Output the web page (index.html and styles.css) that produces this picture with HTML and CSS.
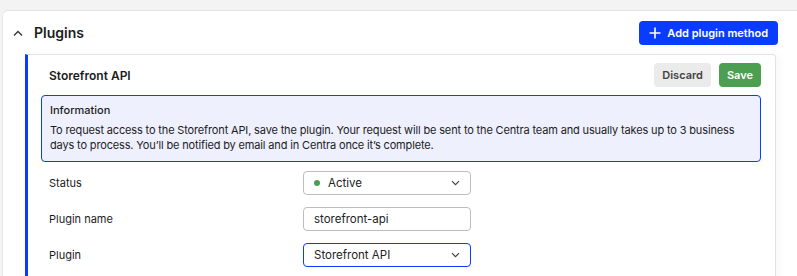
FILE: index.html
```html
<!DOCTYPE html>
<html lang="en">
<head>
    <meta charset="UTF-8">
    <meta name="viewport" content="width=device-width, initial-scale=1.0">
    <title>Plugins</title>
    <link rel="stylesheet" href="styles.css">
</head>
<body>
    <section class="panel">
        <div class="panel-header">
            <div class="panel-title">
                <svg class="chevron" width="10" height="6" viewBox="0 0 10 6"><path d="M1 5.5 L5 1.5 L9 5.5" fill="none" stroke="#333" stroke-width="1.3"/></svg>
                <h2>Plugins</h2>
            </div>
            <button class="btn btn-primary">
                <svg width="12" height="12" viewBox="0 0 12 12"><path d="M6 0.5v11M0.5 6h11" stroke="#fff" stroke-width="1.6"/></svg>
                Add plugin method
            </button>
        </div>

        <div class="plugin-card">
            <div class="card-head">
                <h3>Storefront API</h3>
                <div class="actions">
                    <button class="btn btn-light">Discard</button>
                    <button class="btn btn-success">Save</button>
                </div>
            </div>

            <div class="info">
                <p class="info-title">Information</p>
                <p class="info-text">To request access to the Storefront API, save the plugin. Your request will be sent to the Centra team and usually takes up to 3 business days to process. You’ll be notified by email and in Centra once it’s complete.</p>
            </div>

            <div class="form">
                <div class="form-row">
                    <label>Status</label>
                    <div class="field select">
                        <span class="dot"></span>
                        <span>Active</span>
                        <svg class="caret" width="9" height="6" viewBox="0 0 9 6"><path d="M1 1.2 L4.5 4.7 L8 1.2" fill="none" stroke="#444" stroke-width="1.2"/></svg>
                    </div>
                </div>
                <div class="form-row">
                    <label>Plugin name</label>
                    <div class="field input">storefront-api</div>
                </div>
                <div class="form-row">
                    <label>Plugin</label>
                    <div class="field select focused">
                        <span>Storefront API</span>
                        <svg class="caret" width="9" height="6" viewBox="0 0 9 6"><path d="M1 1.2 L4.5 4.7 L8 1.2" fill="none" stroke="#444" stroke-width="1.2"/></svg>
                    </div>
                </div>
            </div>
        </div>
    </section>
</body>
</html>
```

FILE: styles.css
```css
body {
    font-family: Inter, "Noto Sans", sans-serif;
    margin: 0;
    background: #f3f3f3;
    color: #1c1c1c;
}
.panel {
    margin: 10px 0 0 2px;
    background: #fff;
    border-top: 1px solid #e3e3e3;
    border-left: 1px solid #e8e8e8;
    border-top-left-radius: 6px;
    height: 265px;
    overflow: hidden;
}
.panel-header {
    height: 43px;
    display: flex;
    align-items: center;
    justify-content: space-between;
    padding: 0 19px 0 10px;
}
.panel-title {
    display: flex;
    align-items: center;
    gap: 11px;
}
.panel-title h2 {
    margin: 0;
    font-size: 14px;
    font-weight: 600;
}
.btn {
    font-family: inherit;
    font-size: 11px;
    font-weight: 600;
    border: none;
    border-radius: 4px;
    height: 24px;
    padding: 0 8px;
    display: flex;
    align-items: center;
    white-space: nowrap;
    cursor: pointer;
}
.btn-primary {
    background: #0a3cff;
    color: #fff;
    gap: 6px;
    padding: 0 10px;
}
.btn-light {
    background: #ebebeb;
    color: #444;
}
.btn-success {
    background: #4c9e50;
    color: #fff;
}
.plugin-card {
    margin: 0 21px 0 22px;
    border: 1px solid #e2e2e2;
    border-left: 3px solid #0a3cff;
    border-top-right-radius: 4px;
    box-shadow: 4px 0 10px rgba(0, 0, 0, 0.03);
    height: 240px;
}
.card-head {
    height: 40px;
    display: flex;
    align-items: center;
    justify-content: space-between;
    padding: 0 14px 0 21px;
}
.card-head h3 {
    margin: 0;
    font-size: 12px;
    font-weight: 600;
}
.actions {
    display: flex;
    gap: 8px;
}
.info {
    margin: 0 14px 0 13px;
    border: 1px solid #0a3cff;
    border-radius: 4px;
    background: #eef0fd;
    padding: 7px 8px 8px 8px;
}
.info p {
    margin: 0;
    font-size: 11px;
    line-height: 15px;
}
.info-title {
    font-weight: 500;
    margin-bottom: 5px !important;
}
.info-text {
    letter-spacing: -0.15px;
}
.form {
    padding: 3px 0 0 21px;
}
.form-row {
    display: flex;
    align-items: center;
    height: 36px;
}
.form-row label {
    width: 254px;
    font-size: 11px;
}
.field {
    box-sizing: border-box;
    width: 168px;
    height: 24px;
    border: 1px solid #bdbdbd;
    border-radius: 4px;
    display: flex;
    align-items: center;
    padding: 0 10px;
    font-size: 11.5px;
    color: #222;
}
.field.focused {
    border-color: #0a3cff;
}
.select .caret {
    margin-left: auto;
}
.dot {
    width: 6px;
    height: 6px;
    border-radius: 50%;
    background: #4c9e50;
    margin-right: 8px;
}
```
